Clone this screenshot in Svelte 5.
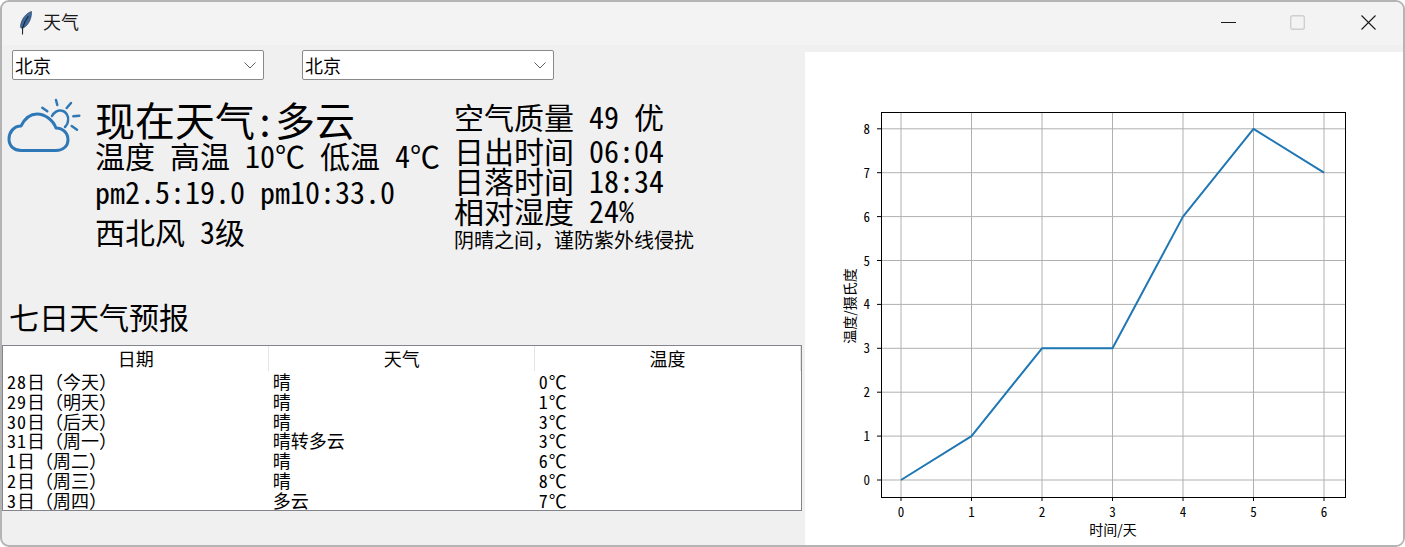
<script>
	const cities = ['北京', '北京'];
	const forecast = [
		['28日（今天）', '晴', '0℃'],
		['29日（明天）', '晴', '1℃'],
		['30日（后天）', '晴', '3℃'],
		['31日（周一）', '晴转多云', '3℃'],
		['1日（周二）', '晴', '6℃'],
		['2日（周三）', '晴', '8℃'],
		['3日（周四）', '多云', '7℃']
	];
	const temps = [0, 1, 3, 3, 6, 8, 7];
	const px = (i) => 96 + i * 70.5;
	const py = (v) => 428 - v * 43.9;
	const line = temps.map((t, i) => `${px(i)},${py(t)}`).join(' ');
	const xTicks = [0, 1, 2, 3, 4, 5, 6];
	const yTicks = [0, 1, 2, 3, 4, 5, 6, 7, 8];

	// ascii runs get half-width glyphs, like the hei font of the original
	const parts = (s) => s.split(/([\x20-\x7e]+)/).filter(Boolean);
	const isAscii = (s) => /^[\x20-\x7e]/.test(s);
</script>

{#snippet mixed(text)}
	{#each parts(text) as p}<span class:half={isAscii(p)}>{p}</span>{/each}
{/snippet}

<div class="window">
	<header class="titlebar">
		<div class="title">
			<svg class="feather" width="16" height="24" viewBox="0 0 16 24">
				<path d="M13.500 0.500C8 2 3.500 8 2.500 14.500c-.2 1.400.2 2.600 1.200 2.800C9 16.500 14 8.500 13.500 0.500z" fill="#3d6a9e" stroke="#26384f" stroke-width="0.6" />
				<path d="M10.500 5C7.500 9 5.500 13 4.600 17.200L4.500 23.500" fill="none" stroke="#1c2430" stroke-width="1.100" />
			</svg>
			<span>天气</span>
		</div>
		<div class="controls">
			<svg width="15" height="15" viewBox="0 0 15 15"><path d="M0 7.500H15" stroke="#1a1a1a" stroke-width="1" /></svg>
			<svg width="15" height="15" viewBox="0 0 15 15"><rect x="0.700" y="0.700" width="13.600" height="13.600" rx="2" fill="none" stroke="#cfcfcf" stroke-width="1.400" /></svg>
			<svg class="close" width="15" height="15" viewBox="0 0 15 15"><path d="M0.500 0.500L14.500 14.500M14.500 0.500L0.500 14.500" stroke="#1a1a1a" stroke-width="1.100" /></svg>
		</div>
	</header>

	<div class="content">
		<section class="left">
			<div class="combos">
				{#each cities as city}
					<div class="combo">
						<span>{city}</span>
						<svg width="12" height="7" viewBox="0 0 12 7"><path d="M0.500 0.500L6 6L11.500 0.500" fill="none" stroke="#606060" stroke-width="1" /></svg>
					</div>
				{/each}
			</div>

			<div class="now">
				<svg class="weather-icon" width="76" height="60" viewBox="0 0 76 60">
					<g fill="none" stroke="#2f78b7" stroke-width="3" stroke-linecap="round" stroke-linejoin="round">
						<path d="M15 55.500H50C57 55.500 62 51 62 45C62 38 57 33 50 33C47 25 39 19 31 19C23 19 18 25 15 31C8 31 3 37 3 44C3 51 8 55.500 15 55.500Z" />
						<path d="M46 21C48 17 52 15 55 15.500C60 16 63 21 62 26C62 28 61 30 59 32" stroke-width="2.500" />
						<path d="M50 5L51.300 10M65 8L60.700 13M67.300 21.300L73.300 20.700M65.700 31L71 34.700M36.300 12.700L41.300 16.300" stroke-width="2.500" />
					</g>
				</svg>
				<div class="main">
					<div class="headline">{@render mixed('现在天气:多云')}</div>
					<div class="big temp">{@render mixed('温度 高温 10℃ 低温 4℃')}</div>
					<div class="big">{@render mixed('pm2.5:19.0 pm10:33.0')}</div>
					<div class="big wind">{@render mixed('西北风 3级')}</div>
				</div>
				<div class="side">
					<div class="row air">{@render mixed('空气质量 49 优')}</div>
					<div class="row">{@render mixed('日出时间 06:04')}</div>
					<div class="row">{@render mixed('日落时间 18:34')}</div>
					<div class="row">{@render mixed('相对湿度 24%')}</div>
					<div class="tip">阴晴之间，谨防紫外线侵扰</div>
				</div>
			</div>

			<h2>七日天气预报</h2>

			<div class="table-wrap">
				<table>
					<thead>
						<tr>
							<th>日期</th>
							<th>天气</th>
							<th>温度</th>
						</tr>
					</thead>
					<tbody>
						{#each forecast as row}
							<tr>
								{#each row as cell}
									<td>{@render mixed(cell)}</td>
								{/each}
							</tr>
						{/each}
					</tbody>
				</table>
			</div>
		</section>

		<section class="chart">
			<svg width="598" height="493" viewBox="0 0 598 493">
				{#each xTicks as t}
					<line x1={px(t)} x2={px(t)} y1="60" y2="445" class="grid" />
					<line x1={px(t)} x2={px(t)} y1="445" y2="449" class="tick" />
					<text x={px(t)} y="465" text-anchor="middle" class="half">{t}</text>
				{/each}
				{#each yTicks as t}
					<line x1="76" x2="540" y1={py(t)} y2={py(t)} class="grid" />
					<line x1="72" x2="76" y1={py(t)} y2={py(t)} class="tick" />
					<text x="65" y={py(t) + 5} text-anchor="end" class="half">{t}</text>
				{/each}
				<polyline points={line} class="series" />
				<rect x="76.500" y="60.500" width="464" height="385" class="frame" />
				<text x="308" y="483" text-anchor="middle" class="label">时间/天</text>
				<text x="0" y="0" text-anchor="middle" class="label" transform="translate(50 254) rotate(-90)">温度/摄氏度</text>
			</svg>
		</section>
	</div>
</div>

<style>
	:global(body) {
		margin: 0;
		background: #fff;
	}
	.window {
		box-sizing: border-box;
		width: 1405px;
		height: 547px;
		border: 2px solid #b4b4b4;
		border-radius: 9px;
		overflow: hidden;
		display: flex;
		flex-direction: column;
		background: #f0f0f0;
		color: #000;
		font-family: 'Noto Sans CJK SC', sans-serif;
	}
	.half {
		font-feature-settings: 'hwid';
	}
	.titlebar {
		box-sizing: border-box;
		height: 43px;
		flex: none;
		display: flex;
		align-items: center;
		justify-content: space-between;
		padding-bottom: 2px;
		background: #f3f3f3;
	}
	.title {
		display: flex;
		align-items: center;
		gap: 9px;
		padding-left: 16px;
		font-size: 18px;
		line-height: 24px;
		color: #1a1a1a;
	}
	.title span {
		position: relative;
		top: -2px;
	}
	.controls {
		display: flex;
		gap: 54px;
		padding-right: 27px;
		align-items: center;
	}
	.close {
		margin-left: 2px;
	}
	.content {
		flex: 1;
		display: flex;
		min-height: 0;
	}
	.left {
		width: 803px;
		flex: none;
	}
	.combos {
		display: flex;
		gap: 38px;
		padding: 5px 0 0 10px;
	}
	.combo {
		box-sizing: border-box;
		width: 252px;
		height: 30px;
		display: flex;
		align-items: center;
		justify-content: space-between;
		background: #fff;
		border: 1px solid #8a8a8a;
		border-radius: 2px;
		padding: 0 7px 0 2px;
		font-size: 18px;
	}
	.now {
		display: flex;
		margin-top: 16px;
		height: 197px;
		padding-left: 4px;
	}
	.weather-icon {
		flex: none;
		margin-top: -1px;
	}
	.main {
		margin-left: 13px;
		width: 359px;
		flex: none;
		white-space: nowrap;
	}
	.headline {
		font-size: 40px;
		line-height: 46px;
	}
	.big {
		font-size: 30px;
		line-height: 36px;
	}
	.temp {
		margin-top: -5px;
	}
	.wind {
		line-height: 40px;
		margin-top: 2px;
	}
	.side {
		white-space: nowrap;
	}
	.row {
		font-size: 30px;
		line-height: 30px;
	}
	.air {
		margin: 5px 0 4px;
	}
	.tip {
		font-size: 20px;
		line-height: 28px;
		margin-top: 1px;
	}
	h2 {
		margin: 0;
		padding-left: 7px;
		font-size: 30px;
		font-weight: 400;
		line-height: 46px;
	}
	.table-wrap {
		box-sizing: border-box;
		width: 800px;
		height: 166px;
		margin-top: 6px;
		border: 1px solid #83848c;
		background: #fff;
		overflow: hidden;
	}
	table {
		width: 798px;
		border-collapse: collapse;
		table-layout: fixed;
		font-size: 18px;
	}
	th {
		height: 25px;
		padding: 0;
		font-weight: 400;
		line-height: 25px;
		border-right: 1px solid #e5e5e5;
	}
	td {
		height: 19.800px;
		padding: 0 0 0 4px;
		line-height: 19.800px;
		white-space: nowrap;
	}
	td .half {
		letter-spacing: 1px;
	}
	tbody tr:first-child td {
		padding-top: 1px;
	}
	.chart {
		flex: 1;
		margin-top: 7px;
		background: #fff;
		min-width: 0;
	}
	.chart svg {
		display: block;
	}
	.chart text {
		font-size: 13px;
		fill: #000;
	}
	.chart text.label {
		font-size: 14px;
	}
	.grid {
		stroke: #b0b0b0;
		stroke-width: 1;
	}
	.tick {
		stroke: #000;
		stroke-width: 1;
	}
	.frame {
		fill: none;
		stroke: #000;
		stroke-width: 1;
	}
	.series {
		fill: none;
		stroke: #1f77b4;
		stroke-width: 2;
		stroke-linejoin: round;
	}
</style>
